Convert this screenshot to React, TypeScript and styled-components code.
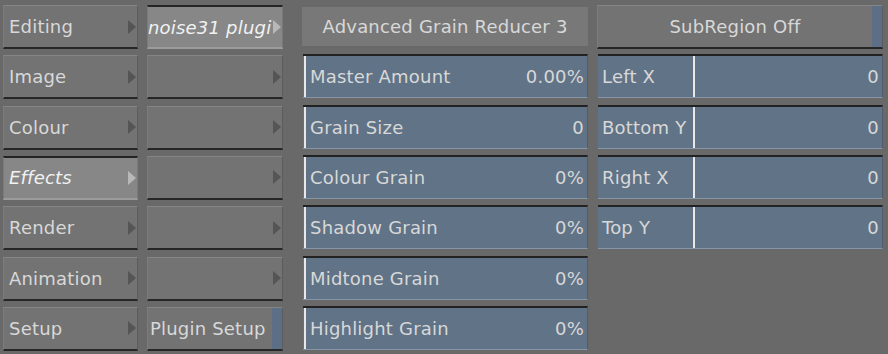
import React from "react";
import styled, { createGlobalStyle, css } from "styled-components";

const Global = createGlobalStyle`
  html, body { margin: 0; padding: 0; background: #696969; }
  body { width: 888px; height: 354px; overflow: hidden; font-family: "DejaVu Sans", "Liberation Sans", sans-serif; }
`;

const Page = styled.div`
  display: grid;
  grid-template-columns: 135px 145px 305px 295px;
  grid-template-rows: repeat(7, 50.33px);
  grid-auto-flow: column;
  padding-left: 3px;
  width: 888px;
  height: 354px;
  box-sizing: border-box;
  background: #696969;
  color: #d8d8d8;
  font-size: 18px;
  letter-spacing: 0.2px;
`;

const Cell = styled.div<{ $ml?: number }>`
  display: flex;
  align-items: flex-start;
  padding-top: 5px;
  padding-left: ${(p) => p.$ml ?? 0}px;
  min-width: 0;
`;

const Button = styled.div<{ $sel?: boolean; $italic?: boolean; $pl?: number }>`
  flex: 1;
  min-width: 0;
  height: 44px;
  box-sizing: border-box;
  display: flex;
  align-items: center;
  padding-left: ${(p) => p.$pl ?? 5}px;
  overflow: hidden;
  white-space: nowrap;
  font-style: ${(p) => (p.$italic ? "italic" : "normal")};
  ${(p) =>
    p.$sel
      ? css`
          background: #878787;
          border-top: 2px solid #242424;
          border-bottom: 2px solid #9c9c9c;
          border-left: 1px solid #7a7a7a;
          border-right: 1px solid #7a7a7a;
          color: #f2f2f2;
        `
      : css`
          background: #737373;
          border-top: 1px solid #858585;
          border-bottom: 2px solid #262626;
          border-left: 1px solid #7c7c7c;
          border-right: 1px solid #5c5c5c;
        `}
`;

const Label = styled.span<{ $center?: boolean }>`
  flex: 1;
  overflow: hidden;
  text-align: ${(p) => (p.$center ? "center" : "left")};
`;

const Arrow = styled.span<{ $sel?: boolean }>`
  flex: none;
  width: 0;
  height: 0;
  margin-right: 1px;
  border-top: 7px solid transparent;
  border-bottom: 7px solid transparent;
  border-left: 8px solid ${(p) => (p.$sel ? "#b8b8b8" : "#555555")};
`;

const Stripe = styled.span`
  flex: none;
  align-self: stretch;
  width: 10px;
  background: #5d6f86;
  margin-bottom: -2px;
  box-shadow: inset 0 -2px 0 #23236b;
`;

const Header = styled.div`
  flex: 1;
  height: 39px;
  margin-top: 2px;
  background: #787878;
  display: flex;
  align-items: center;
  justify-content: center;
`;

const Field = styled.div`
  flex: 1;
  height: 44px;
  margin-top: -1px;
  box-sizing: border-box;
  background: #617386;
  border-top: 2px solid #222222;
  border-bottom: 1px solid #8696a6;
  border-right: 1px solid #4f5d6c;
  display: flex;
  align-items: center;
  white-space: nowrap;
`;

const Cursor = styled.span`
  align-self: stretch;
  width: 2px;
  background: #e8e8e8;
  margin-left: 1px;
`;

const FieldLabel = styled.span<{ $w?: number }>`
  padding-left: 4px;
  ${(p) => (p.$w ? `width: ${p.$w}px; flex: none; box-sizing: border-box;` : "flex: 1;")}
`;

const FieldValue = styled.span`
  flex: 1;
  text-align: right;
  padding-right: 3px;
`;

const Divider = styled.span`
  align-self: stretch;
  width: 2px;
  background: #e8e8e8;
`;

const leftItems = [
  { l: "Editing" },
  { l: "Image" },
  { l: "Colour" },
  { l: "Effects", sel: true, italic: true },
  { l: "Render" },
  { l: "Animation" },
  { l: "Setup" },
];

const grainFields = [
  ["Master Amount", "0.00%"],
  ["Grain Size", "0"],
  ["Colour Grain", "0%"],
  ["Shadow Grain", "0%"],
  ["Midtone Grain", "0%"],
  ["Highlight Grain", "0%"],
];

const regionFields = ["Left X", "Bottom Y", "Right X", "Top Y"];

export default function App() {
  return (
    <>
      <Global />
      <Page>
        {leftItems.map((it) => (
          <Cell key={it.l}>
            <Button $sel={it.sel} $italic={it.italic}>
              <Label>{it.l}</Label>
              <Arrow $sel={it.sel} />
            </Button>
          </Cell>
        ))}

        <Cell $ml={9}>
          <Button $sel $italic $pl={0}>
            <Label>noise31 plugi</Label>
            <Arrow $sel />
          </Button>
        </Cell>
        {[1, 2, 3, 4, 5].map((i) => (
          <Cell key={i} $ml={9}>
            <Button>
              <Label />
              <Arrow />
            </Button>
          </Cell>
        ))}
        <Cell $ml={9}>
          <Button $pl={2}>
            <Label>Plugin Setup</Label>
            <Stripe />
          </Button>
        </Cell>

        <Cell $ml={19}>
          <Header>Advanced Grain Reducer 3</Header>
        </Cell>
        {grainFields.map(([l, v]) => (
          <Cell key={l} $ml={20}>
            <Field>
              <Cursor />
              <FieldLabel>{l}</FieldLabel>
              <FieldValue>{v}</FieldValue>
            </Field>
          </Cell>
        ))}

        <Cell $ml={9}>
          <Button $pl={0}>
            <Label $center>SubRegion Off</Label>
            <Stripe />
          </Button>
        </Cell>
        {regionFields.map((l) => (
          <Cell key={l} $ml={10}>
            <Field>
              <FieldLabel $w={95}>{l}</FieldLabel>
              <Divider />
              <FieldValue>0</FieldValue>
            </Field>
          </Cell>
        ))}
      </Page>
    </>
  );
}
